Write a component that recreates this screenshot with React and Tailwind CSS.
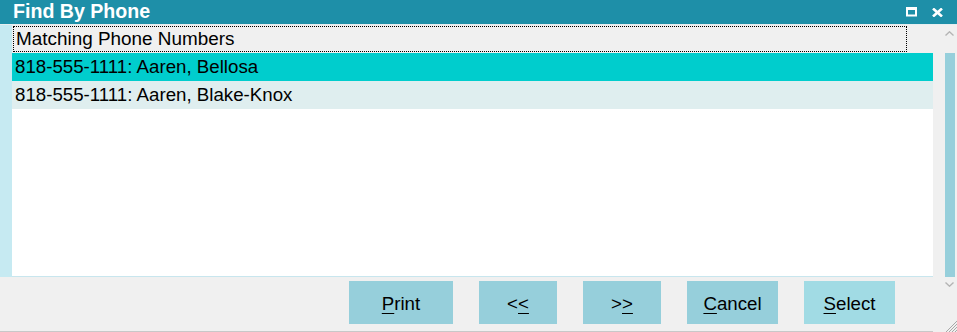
import React from "react";

const rows = [
  { phone: "818-555-1111", name: "Aaren, Bellosa", selected: true },
  { phone: "818-555-1111", name: "Aaren, Blake-Knox", selected: false },
];

const buttons = [
  { key: "print", pre: "", u: "P", post: "rint", w: "w-[104px]", bg: "bg-[#96cfdb]" },
  { key: "prev", pre: "<", u: "<", post: "", w: "w-[78px]", bg: "bg-[#96cfdb]" },
  { key: "next", pre: ">", u: ">", post: "", w: "w-[78px]", bg: "bg-[#96cfdb]" },
  { key: "cancel", pre: "", u: "C", post: "ancel", w: "w-[91px]", bg: "bg-[#96cfdb]" },
  { key: "select", pre: "", u: "S", post: "elect", w: "w-[91px]", bg: "bg-[#a1dbe4]" },
];

const App = () => {
  return (
    <div className="w-[957px] h-[332px] flex flex-col overflow-hidden bg-[#f0f0f0] text-black font-['Liberation_Sans',Arial,sans-serif]">
      {/* Title bar */}
      <div className="h-[25px] shrink-0 flex items-center bg-[#1e8fa8] border-b border-[#e6eef0]">
        <span className="pl-[13px] text-white font-bold text-[19.6px] leading-none">Find By Phone</span>
        <div className="ml-auto flex items-center gap-[15px] pr-[14px]">
          <svg width="11" height="10" viewBox="0 0 11 10">
            <rect x="1" y="1.5" width="9" height="7" fill="none" stroke="#fff" strokeWidth="2" />
            <rect x="0" y="0" width="11" height="3" fill="#fff" />
          </svg>
          <svg width="11" height="9" viewBox="0 0 11 9">
            <path d="M1 0.5 L10 8.5 M10 0.5 L1 8.5" stroke="#fff" strokeWidth="2.6" />
          </svg>
        </div>
      </div>

      <div className="flex flex-1 min-h-0">
        {/* Left column: list + button bar */}
        <div className="flex-1 flex flex-col">
          <div className="h-[252px] shrink-0 flex">
            <div className="w-[12px] bg-[#c6eaf2]" />
            <div className="flex-1 flex flex-col bg-white border-b border-[#c8e6ee]">
              {/* Header */}
              <div className="h-[28px] bg-[#f0f0f0] pt-[1px] pl-[1px] pr-[26px]">
                <div className="h-[26px] border border-dotted border-black flex items-center pl-[2px] text-[18.9px] leading-none">
                  Matching Phone Numbers
                </div>
              </div>
              {rows.map((r, i) => (
                <div
                  key={i}
                  className={`h-[28px] flex items-center pl-[3px] text-[18.7px] leading-none ${
                    r.selected ? "bg-[#00cdcd]" : "bg-[#dfeeef]"
                  }`}
                >
                  {r.phone}: {r.name}
                </div>
              ))}
            </div>
          </div>

          {/* Button bar */}
          <div className="flex-1 flex justify-end gap-[26px] pt-[4px] pr-[38px] border-b border-[#c8c8c8]">
            {buttons.map((b) => (
              <button
                key={b.key}
                className={`${b.w} ${b.bg} h-[43px] flex items-center justify-center pt-[4px] text-[18.7px] leading-none`}
              >
                {b.pre}
                <u className="underline-offset-[3px]">{b.u}</u>
                {b.post}
              </button>
            ))}
          </div>
        </div>

        {/* Scrollbar */}
        <div className="w-[24px] flex flex-col bg-[#f0f0f0]">
          <div className="h-[28px] flex items-start justify-center pt-[6px] pl-[9px]">
            <svg width="9" height="5" viewBox="0 0 9 5">
              <path d="M0.5 4.5 L4.5 0.8 L8.5 4.5" fill="none" stroke="#b4b4b4" strokeWidth="1.4" />
            </svg>
          </div>
          <div className="h-[224px] flex justify-end pr-[2px]">
            <div className="w-[10px] bg-[#96cfdb]" />
          </div>
          <div className="h-[14px] flex items-center justify-center pl-[9px]">
            <svg width="9" height="5" viewBox="0 0 9 5">
              <path d="M0.5 0.5 L4.5 4.2 L8.5 0.5" fill="none" stroke="#b4b4b4" strokeWidth="1.4" />
            </svg>
          </div>
          <div className="flex-1 flex items-end justify-end">
            <svg width="12" height="12" viewBox="0 0 12 12">
              <path d="M12 1 L1 12 M12 4 L4 12 M12 7 L7 12 M12 10 L10 12" stroke="#a8a8a8" strokeWidth="1" />
            </svg>
          </div>
        </div>
      </div>
    </div>
  );
};

export default App;
